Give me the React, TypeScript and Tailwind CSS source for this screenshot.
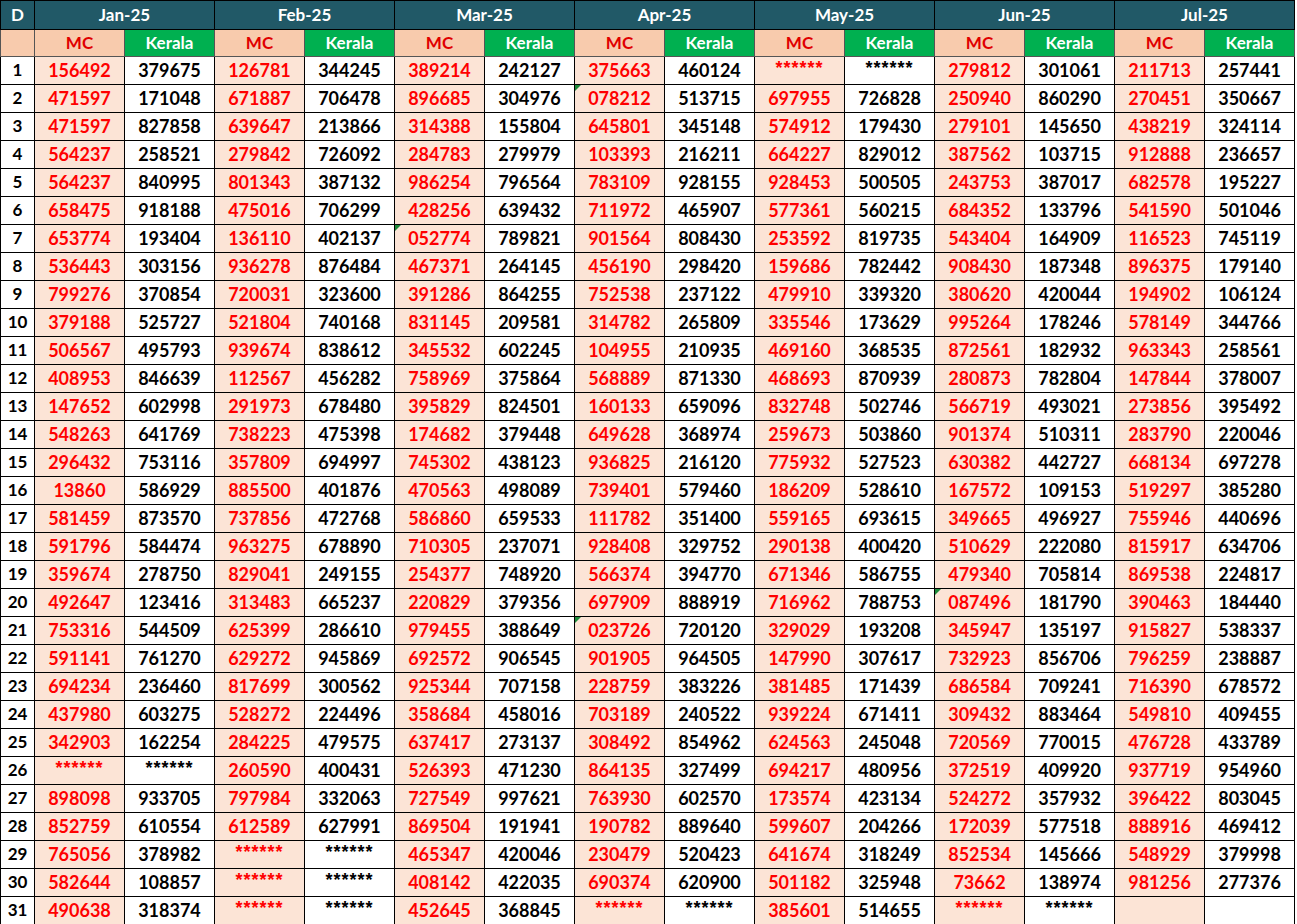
import React from "react";

const raw = `156492 379675 126781 344245 389214 242127 375663 460124 ****** ****** 279812 301061 211713 257441
471597 171048 671887 706478 896685 304976 078212 513715 697955 726828 250940 860290 270451 350667
471597 827858 639647 213866 314388 155804 645801 345148 574912 179430 279101 145650 438219 324114
564237 258521 279842 726092 284783 279979 103393 216211 664227 829012 387562 103715 912888 236657
564237 840995 801343 387132 986254 796564 783109 928155 928453 500505 243753 387017 682578 195227
658475 918188 475016 706299 428256 639432 711972 465907 577361 560215 684352 133796 541590 501046
653774 193404 136110 402137 052774 789821 901564 808430 253592 819735 543404 164909 116523 745119
536443 303156 936278 876484 467371 264145 456190 298420 159686 782442 908430 187348 896375 179140
799276 370854 720031 323600 391286 864255 752538 237122 479910 339320 380620 420044 194902 106124
379188 525727 521804 740168 831145 209581 314782 265809 335546 173629 995264 178246 578149 344766
506567 495793 939674 838612 345532 602245 104955 210935 469160 368535 872561 182932 963343 258561
408953 846639 112567 456282 758969 375864 568889 871330 468693 870939 280873 782804 147844 378007
147652 602998 291973 678480 395829 824501 160133 659096 832748 502746 566719 493021 273856 395492
548263 641769 738223 475398 174682 379448 649628 368974 259673 503860 901374 510311 283790 220046
296432 753116 357809 694997 745302 438123 936825 216120 775932 527523 630382 442727 668134 697278
13860 586929 885500 401876 470563 498089 739401 579460 186209 528610 167572 109153 519297 385280
581459 873570 737856 472768 586860 659533 111782 351400 559165 693615 349665 496927 755946 440696
591796 584474 963275 678890 710305 237071 928408 329752 290138 400420 510629 222080 815917 634706
359674 278750 829041 249155 254377 748920 566374 394770 671346 586755 479340 705814 869538 224817
492647 123416 313483 665237 220829 379356 697909 888919 716962 788753 087496 181790 390463 184440
753316 544509 625399 286610 979455 388649 023726 720120 329029 193208 345947 135197 915827 538337
591141 761270 629272 945869 692572 906545 901905 964505 147990 307617 732923 856706 796259 238887
694234 236460 817699 300562 925344 707158 228759 383226 381485 171439 686584 709241 716390 678572
437980 603275 528272 224496 358684 458016 703189 240522 939224 671411 309432 883464 549810 409455
342903 162254 284225 479575 637417 273137 308492 854962 624563 245048 720569 770015 476728 433789
****** ****** 260590 400431 526393 471230 864135 327499 694217 480956 372519 409920 937719 954960
898098 933705 797984 332063 727549 997621 763930 602570 173574 423134 524272 357932 396422 803045
852759 610554 612589 627991 869504 191941 190782 889640 599607 204266 172039 577518 888916 469412
765056 378982 ****** ****** 465347 420046 230479 520423 641674 318249 852534 145666 548929 379998
582644 108857 ****** ****** 408142 422035 690374 620900 501182 325948 73662 138974 981256 277376
490638 318374 ****** ****** 452645 368845 ****** ****** 385601 514655 ****** ****** - -`;

const rows = raw.split("\n").map((l) => l.trim().split(/\s+/).map((v) => (v === "-" ? "" : v)));
const months = ["Jan-25", "Feb-25", "Mar-25", "Apr-25", "May-25", "Jun-25", "Jul-25"];
const tri = new Set(["1-6", "6-4", "20-6", "19-10"]);

export default function App() {
  return (
    <div className="w-[1297px] h-[924px] bg-white overflow-hidden" style={{ fontFamily: "Lato, 'Open Sans', sans-serif" }}>
      <table className="border-collapse table-fixed font-bold" style={{ width: 1293 }}>
        <colgroup>
          <col style={{ width: 34 }} />
          {Array.from({ length: 14 }).map((_, i) => (
            <col key={i} style={{ width: 90 }} />
          ))}
        </colgroup>
        <thead>
          <tr className="h-[29px] bg-[#215967] text-white text-[17px]">
            <th className="border border-black">D</th>
            {months.map((m) => (
              <th key={m} colSpan={2} className="border border-black">{m}</th>
            ))}
          </tr>
          <tr className="h-[26px] text-[17px]">
            <th className="border border-[#555] bg-[#f8cbad]"></th>
            {months.map((m) => (
              <React.Fragment key={m}>
                <th className="border border-[#555] bg-[#f8cbad] text-[#e00000]">MC</th>
                <th className="border border-[#555] bg-[#00b050] text-white">Kerala</th>
              </React.Fragment>
            ))}
          </tr>
        </thead>
        <tbody>
          {rows.map((r, ri) => (
            <tr key={ri} className="h-[28px] text-[18px]">
              <td className="border border-black text-center text-[17px] text-black">{ri + 1}</td>
              {r.map((v, ci) => (
                <td
                  key={ci}
                  className={
                    "relative border border-black text-center leading-none " +
                    (ci % 2 === 0 ? "bg-[#fce4d6] text-[#ff0000]" : "bg-white text-black")
                  }
                >
                  {tri.has(`${ri}-${ci}`) && (
                    <span className="absolute left-0 top-0 w-0 h-0 border-t-[6px] border-r-[6px] border-t-[#1e8a3a] border-r-transparent" />
                  )}
                  {v.startsWith("*") ? (
                    <span className="inline-block -translate-y-[3px] text-[18px] tracking-[1px]" style={{ fontFamily: "'Liberation Sans', sans-serif" }}>{v}</span>
                  ) : (
                    v
                  )}
                </td>
              ))}
            </tr>
          ))}
        </tbody>
      </table>
    </div>
  );
}
